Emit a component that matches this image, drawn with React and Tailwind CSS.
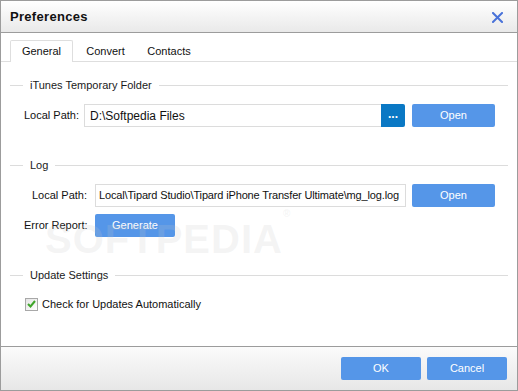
import React, { useState } from "react";

const font = "font-['Tahoma','Liberation_Sans',sans-serif]";

function SectionHeader({ title, className = "" }) {
  return (
    <div className={`flex items-center h-[14px] ${className}`}>
      <div className="w-[13px] h-px bg-[#dcdcdc]" />
      <span className="px-[7px] text-[11px] leading-none text-[#1a1a1a] whitespace-nowrap">{title}</span>
      <div className="flex-1 h-px bg-[#dcdcdc]" />
    </div>
  );
}

function BlueButton({ children, className = "" }) {
  return (
    <button className={`h-[23px] rounded-[2px] bg-[#5596e8] text-white text-[11px] leading-none ${className}`}>
      {children}
    </button>
  );
}

export default function App() {
  const [autoUpdate, setAutoUpdate] = useState(true);
  const [tab, setTab] = useState("General");

  return (
    <div className={`w-[518px] h-[391px] flex flex-col border border-[#9c9c9c] bg-white overflow-hidden ${font}`}>
      {/* title bar */}
      <div className="h-[32px] flex items-center justify-between border-b border-[#9c9c9c] bg-gradient-to-b from-[#ffffff] to-[#e9e9e9] pl-[9px] pr-[14px]">
        <span className="text-[13px] font-bold text-[#111] tracking-[0.3px]">Preferences</span>
        <svg width="11" height="11" viewBox="0 0 11 11" className="mt-px">
          <path d="M1 1 L10 10 M10 1 L1 10" stroke="#4a73d9" strokeWidth="2" strokeLinecap="square" />
        </svg>
      </div>

      {/* tabs */}
      <div className="flex items-end h-[29px] border-b border-[#dedede] pl-[9px] pt-[7px]">
        {["General", "Convert", "Contacts"].map((t) => (
          <button
            key={t}
            onClick={() => setTab(t)}
            className={`h-[22px] text-[11px] leading-none text-[#111] -mb-px ${
              t === "General"
                ? "w-[63px] border border-b-0 border-[#dedede] rounded-t-[2px] bg-white"
                : t === "Convert"
                ? "w-[65px]"
                : "w-[62px]"
            }`}
          >
            {t}
          </button>
        ))}
      </div>

      {/* body */}
      <div className="relative flex-1 px-[9px] text-[11px] text-[#111]">
        <SectionHeader title="iTunes Temporary Folder" className="mt-[16px]" />

        <div className="flex items-center mt-[12px] pl-[14px]">
          <span className="w-[60px] whitespace-nowrap">Local Path:</span>
          <div className="w-[297px] h-[23px] flex items-center border border-r-0 border-[#dcdcdc] px-[5px] text-[12px]">
            D:\Softpedia Files
          </div>
          <button className="w-[24px] h-[23px] rounded-r-[2px] bg-[#0a78c4] text-white text-[12px] font-bold leading-none pb-[4px]">
            ...
          </button>
          <BlueButton className="w-[83px] ml-[7px]">Open</BlueButton>
        </div>

        <SectionHeader title="Log" className="mt-[31px]" />

        <div className="flex items-center mt-[12px] pl-[14px]">
          <span className="w-[64px] pr-[1px] text-right whitespace-nowrap">Local Path:</span>
          <div className="ml-[7px] w-[311px] h-[23px] flex items-center border border-[#dcdcdc] px-[3px] text-[11px] tracking-[-0.15px] whitespace-nowrap overflow-hidden">
            Local\Tipard Studio\Tipard iPhone Transfer Ultimate\mg_log.log
          </div>
          <BlueButton className="w-[83px] ml-[6px]">Open</BlueButton>
        </div>

        <div className="flex items-center mt-[7px] pl-[14px]">
          <span className="w-[64px] pr-[1px] text-right whitespace-nowrap">Error Report:</span>
          <BlueButton className="ml-[7px] w-[80px] h-[22px]">Generate</BlueButton>
        </div>

        <SectionHeader title="Update Settings" className="mt-[31px]" />

        <label className="flex items-center mt-[14px] pl-[15px] cursor-pointer">
          <input type="checkbox" checked={autoUpdate} onChange={(e) => setAutoUpdate(e.target.checked)} className="hidden" />
          <span className="w-[13px] h-[13px] border border-[#a8a8a8] bg-gradient-to-br from-[#e4e4e4] to-white flex items-center justify-center">
            {autoUpdate && (
              <svg width="9" height="8" viewBox="0 0 9 8">
                <path d="M1 4 L3.5 6.5 L8 1" fill="none" stroke="#3fa52a" strokeWidth="2" />
              </svg>
            )}
          </span>
          <span className="ml-[4px] whitespace-nowrap">Check for Updates Automatically</span>
        </label>

        {/* watermark */}
        <div className="absolute left-[44px] top-[157px] text-[40px] font-bold leading-none tracking-[1px] text-[#c8c8c8]/20 pointer-events-none select-none">
          SOFTPEDIA<sup className="text-[10px] align-top">®</sup>
        </div>
      </div>

      {/* footer */}
      <div className="h-[44px] flex items-center justify-end gap-[6px] border-t border-[#9c9c9c] bg-gradient-to-b from-[#fbfbfb] to-[#e7e7e7] pr-[10px]">
        <BlueButton className="w-[80px]">OK</BlueButton>
        <BlueButton className="w-[80px]">Cancel</BlueButton>
      </div>
    </div>
  );
}
